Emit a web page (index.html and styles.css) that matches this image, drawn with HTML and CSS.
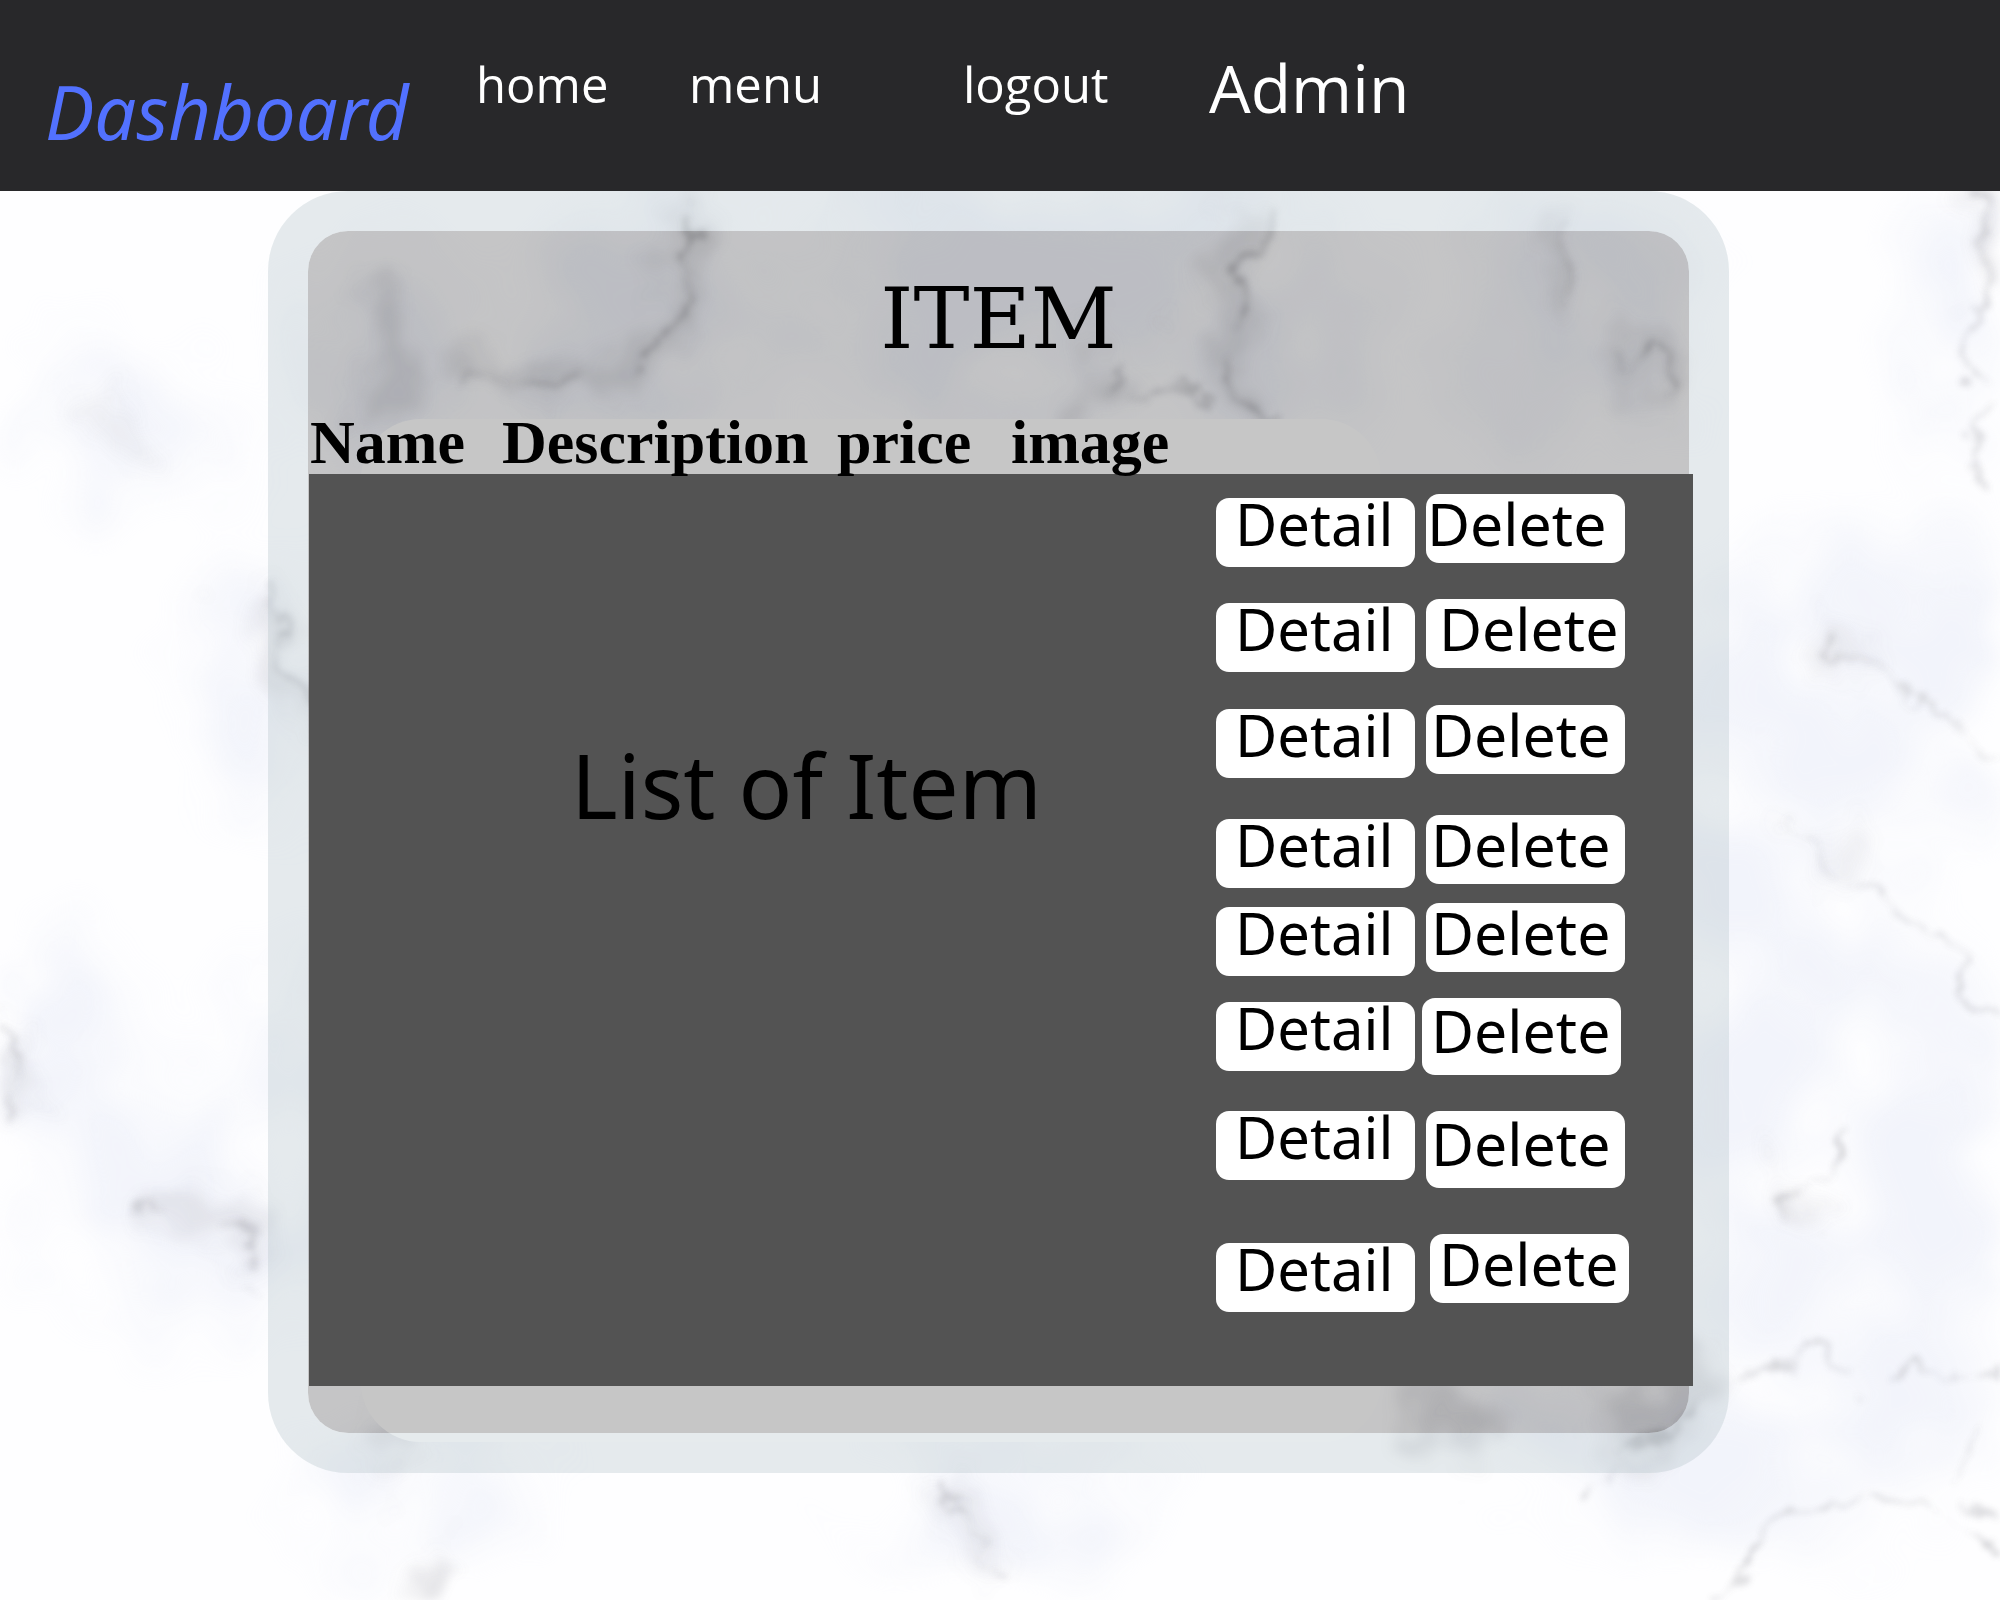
FILE: index.html
```html
<!DOCTYPE html>
<html lang="en">
<head>
<meta charset="utf-8">
<title>Dashboard</title>
<link rel="stylesheet" href="styles.css">
</head>
<body>
<header class="topbar">
  <a class="brand" href="#">Dashboard</a>
  <nav class="nav">
    <a class="nav-link" href="#">home</a>
    <a class="nav-link" href="#">menu</a>
    <a class="nav-link" href="#">logout</a>
  </nav>
  <span class="user">Admin</span>
</header>
<main class="page">
  <svg class="marble" viewBox="0 191 2000 1409" preserveAspectRatio="none" aria-hidden="true">
    <defs>
      <filter id="cloud" filterUnits="userSpaceOnUse" x="0" y="150" width="2000" height="1450">
        <feGaussianBlur stdDeviation="30" result="b"/>
        <feTurbulence type="fractalNoise" baseFrequency="0.009" numOctaves="5" seed="21" result="n"/>
        <feDisplacementMap in="b" in2="n" scale="160" xChannelSelector="R" yChannelSelector="G" result="d"/>
        <feColorMatrix in="n" type="matrix" values="0 0 0 0 0  0 0 0 0 0  0 0 0 0 0  0 0 3 0 -0.6" result="m"/>
        <feComposite in="d" in2="m" operator="in"/>
        <feGaussianBlur stdDeviation="10"/>
      </filter>
      <filter id="smoke" filterUnits="userSpaceOnUse" x="0" y="150" width="2000" height="1450">
        <feTurbulence type="fractalNoise" baseFrequency="0.014" numOctaves="5" seed="4" result="n"/>
        <feGaussianBlur in="SourceGraphic" stdDeviation="12" result="b"/>
        <feDisplacementMap in="b" in2="n" scale="110" xChannelSelector="R" yChannelSelector="G" result="d"/>
        <feGaussianBlur in="d" stdDeviation="5"/>
      </filter>
      <filter id="vein" filterUnits="userSpaceOnUse" x="0" y="150" width="2000" height="1450">
        <feTurbulence type="fractalNoise" baseFrequency="0.014" numOctaves="5" seed="4" result="n"/>
        <feDisplacementMap in="SourceGraphic" in2="n" scale="90" xChannelSelector="R" yChannelSelector="G" result="d"/>
        <feColorMatrix in="n" type="matrix" values="0 0 0 0 0  0 0 0 0 0  0 0 0 0 0  0 0 5 0 -1.8" result="m"/>
        <feComposite in="d" in2="m" operator="in"/>
        <feGaussianBlur stdDeviation="3"/>
      </filter>
    </defs>
    <rect y="191" width="2000" height="1409" fill="#fefeff"/>
    <g filter="url(#cloud)" fill="#e6eaf7" opacity=".48">
      <ellipse cx="110" cy="420" rx="130" ry="60"/>
      <ellipse cx="270" cy="680" rx="70" ry="130"/>
      <ellipse cx="60" cy="1060" rx="90" ry="100"/>
      <ellipse cx="220" cy="1210" rx="190" ry="110"/>
      <ellipse cx="290" cy="1090" rx="60" ry="150"/>
      <ellipse cx="420" cy="1490" rx="120" ry="60"/>
      <ellipse cx="400" cy="370" rx="70" ry="110"/>
      <ellipse cx="660" cy="320" rx="130" ry="120"/>
      <ellipse cx="1000" cy="290" rx="180" ry="130"/>
      <ellipse cx="1240" cy="310" rx="110" ry="140"/>
      <ellipse cx="1580" cy="310" rx="110" ry="130"/>
      <ellipse cx="1870" cy="690" rx="190" ry="150"/>
      <ellipse cx="1750" cy="880" rx="120" ry="210"/>
      <ellipse cx="1870" cy="1150" rx="210" ry="190"/>
      <ellipse cx="1740" cy="1420" rx="260" ry="110"/>
      <ellipse cx="1960" cy="320" rx="60" ry="140"/>
      <ellipse cx="1020" cy="1500" rx="130" ry="90"/>
    </g>
    <g filter="url(#smoke)" fill="none" stroke="#a0a0a8" stroke-linecap="round" stroke-linejoin="round" opacity=".75">
      <path d="M690 200 L680 270 L655 340 L620 380 L520 380 L460 390" stroke-width="24" opacity=".42"/>
      <path d="M375 300 L390 350 L375 410" stroke-width="36" opacity=".35"/>
      <path d="M1250 200 L1225 290 L1210 350 L1260 380" stroke-width="24" opacity=".4"/>
      <path d="M1070 410 L1100 370" stroke-width="34" opacity=".4"/>
      <path d="M1560 230 L1560 290" stroke-width="22" opacity=".4"/>
      <path d="M1640 340 L1655 390" stroke-width="24" opacity=".35"/>
      <path d="M140 1210 L200 1210 L250 1240" stroke-width="34" opacity=".3"/>
      <path d="M250 600 L305 700" stroke-width="34" opacity=".3"/>
      <path d="M1990 200 L1985 280" stroke-width="28" opacity=".3"/>
      <path d="M1830 650 L1860 660" stroke-width="24" opacity=".3"/>
      <path d="M1820 830 L1870 870" stroke-width="18" opacity=".25"/>
      <path d="M1770 1180 L1800 1220" stroke-width="26" opacity=".4"/>
      <path d="M1440 1425 L1480 1430" stroke-width="55" opacity=".4"/>
      <path d="M1620 1430 L1690 1380" stroke-width="50" opacity=".4"/>
      <path d="M0 1030 L20 1100" stroke-width="22" opacity=".35"/>
      <path d="M380 1450 L400 1440" stroke-width="30" opacity=".35"/>
      <path d="M415 1570 L425 1600" stroke-width="24" opacity=".5"/>
      <path d="M95 400 L120 450" stroke-width="36" opacity=".15"/>
      <path d="M940 1500 L990 1560" stroke-width="26" opacity=".25"/>
    </g>
    <g filter="url(#vein)" fill="none" stroke="#8a8a90" stroke-width="5" stroke-linecap="round" stroke-linejoin="round" opacity=".8">
      <path d="M690 200 L675 250 L682 290 L650 340 L635 370 L560 385 L470 390 L450 420" opacity=".55"/>
      <path d="M1275 200 L1245 260 L1220 330 L1235 375 L1290 400" opacity=".55"/>
      <path d="M1570 220 L1568 300 L1640 350 L1665 420" opacity=".5"/>
      <path d="M1120 350 L1080 410 M1110 400 L1210 395" opacity=".4"/>
      <path d="M255 580 L280 640 L320 700" opacity=".5"/>
      <path d="M0 1010 L20 1060 L12 1110" opacity=".4"/>
      <path d="M130 1200 L190 1235 L250 1240 L270 1290" opacity=".35"/>
      <path d="M1740 790 L1810 830 L1870 890 L1960 960 L2000 1040" opacity=".4"/>
      <path d="M1830 650 L1880 670 L1930 710 L2000 750" opacity=".3"/>
      <path d="M1840 1140 L1800 1160 L1765 1190 L1790 1230 L1830 1245" opacity=".5"/>
      <path d="M1730 1370 L1800 1360 L1860 1375 L1990 1360" opacity=".4"/>
      <path d="M1590 1500 L1640 1440 L1700 1390" opacity=".5"/>
      <path d="M1720 1600 L1780 1540 L1830 1500 L1920 1500 L1940 1540 L2000 1560" opacity=".5"/>
      <path d="M1970 1420 L1960 1480 L2000 1530" opacity=".4"/>
      <path d="M930 1480 L960 1520 L1000 1580" opacity=".35"/>
      <path d="M1980 200 L1985 300 L1970 420 L2000 480" opacity=".35"/>
    </g>
  </svg>
  <section class="panel">
    <h1 class="title">ITEM</h1>
    <div class="columns">
      <span>Name</span>
      <span>Description</span>
      <span>price</span>
      <span>image</span>
    </div>
    <div class="list">
      <p class="list-label">List of Item</p>
      <ul class="actions">
        <li class="row"><button class="btn detail" type="button">Detail</button><button class="btn delete near" type="button">Delete</button></li>
        <li class="row"><button class="btn detail" type="button">Detail</button><button class="btn delete far" type="button">Delete</button></li>
        <li class="row"><button class="btn detail" type="button">Detail</button><button class="btn delete" type="button">Delete</button></li>
        <li class="row"><button class="btn detail" type="button">Detail</button><button class="btn delete" type="button">Delete</button></li>
        <li class="row"><button class="btn detail" type="button">Detail</button><button class="btn delete" type="button">Delete</button></li>
        <li class="row tight"><button class="btn detail" type="button">Detail</button><button class="btn delete tall mid" type="button">Delete</button></li>
        <li class="row level"><button class="btn detail" type="button">Detail</button><button class="btn delete tall" type="button">Delete</button></li>
        <li class="row loose"><button class="btn detail" type="button">Detail</button><button class="btn delete mid" type="button">Delete</button></li>
      </ul>
    </div>
  </section>
</main>
</body>
</html>
```
FILE: styles.css
```css
* {
  box-sizing: border-box;
}

body {
  margin: 0;
  min-height: 100vh;
  display: flex;
  flex-direction: column;
  font-family: "Noto Sans", "Open Sans", sans-serif;
  color: #000;
}

.topbar {
  display: grid;
  grid-template-columns: 431px 733px auto;
  align-items: start;
  min-height: 191px;
  padding: 0 45px;
  background: #28282a;
}

.brand {
  padding-top: 62px;
  color: #5271ff;
  font-size: 74px;
  font-style: italic;
  line-height: 100px;
  text-decoration: none;
}

.nav {
  display: grid;
  grid-template-columns: 213px 274px auto;
  padding-top: 52px;
}

.nav-link {
  color: #fff;
  font-family: "Open Sans", "Noto Sans", sans-serif;
  font-size: 49px;
  line-height: 64px;
  text-decoration: none;
}

.user {
  padding-top: 42px;
  color: #fff;
  font-family: "Open Sans", "Noto Sans", sans-serif;
  font-size: 66px;
  line-height: 90px;
}

.page {
  position: relative;
  isolation: isolate;
  flex: 1;
  overflow: hidden;
  padding: 0 13.55% 127px 13.4%;
}

.marble {
  position: absolute;
  inset: 0;
  z-index: -2;
  width: 100%;
  height: 100%;
}

.panel {
  position: relative;
  padding-bottom: 47px;
  border: 40px solid rgba(178, 194, 200, 0.33);
  border-radius: 80px;
  background: rgba(0, 0, 0, 0.224);
  background-clip: padding-box;
}

/* plain white sheet under the translucent panel */
.panel::before {
  content: "";
  position: absolute;
  inset: 188px 308px -9px 53px;
  z-index: -1;
  border-radius: 60px;
  background: #fff;
}

.title {
  margin: 0;
  padding-bottom: 12px;
  font-family: "DejaVu Serif", serif;
  font-size: 84px;
  font-weight: 400;
  line-height: 176px;
  text-align: center;
}

.columns {
  display: grid;
  grid-template-columns: 192px 335px 174px auto;
  height: 55px;
  padding-left: 2px;
  font-family: "Liberation Serif", serif;
  font-size: 62px;
  font-weight: 700;
  line-height: 46px;
}

.list {
  display: grid;
  grid-template-columns: minmax(0, 1fr) 413px;
  margin: 0 -4px 0 1px;
  padding-right: 64px;
  background: #535353;
}

.list-label {
  margin: 0;
  padding: 251px 0 0 88px;
  font-size: 89px;
  line-height: 120px;
  text-align: center;
}

.actions {
  display: grid;
  grid-template-rows: 105px 106px 110px 88px 95px 113px 123px 152px;
  margin: 0;
  padding: 20px 0 0;
  list-style: none;
}

.row {
  display: flex;
  align-items: flex-start;
  gap: 11px;
}

.btn {
  display: flex;
  align-items: flex-start;
  width: 199px;
  height: 69px;
  border: 0;
  border-radius: 13px;
  background: #fff;
  color: #000;
  font-family: inherit;
  font-size: 59px;
  line-height: 50px;
  white-space: nowrap;
}

.detail {
  margin-top: 4px;
  padding: 1px 0 0 19px;
  font-size: 58px;
}

.delete {
  padding: 4px 0 0 5px;
}

.near {
  padding-left: 1px;
}

.mid {
  padding-left: 9px;
}

.far {
  padding-left: 13px;
}

.tall {
  height: 77px;
  padding-top: 7px;
}

.tight {
  gap: 7px;
}

.level .detail {
  margin-top: 0;
}

.loose {
  gap: 15px;
}

.loose .detail {
  margin-top: 9px;
}
```
